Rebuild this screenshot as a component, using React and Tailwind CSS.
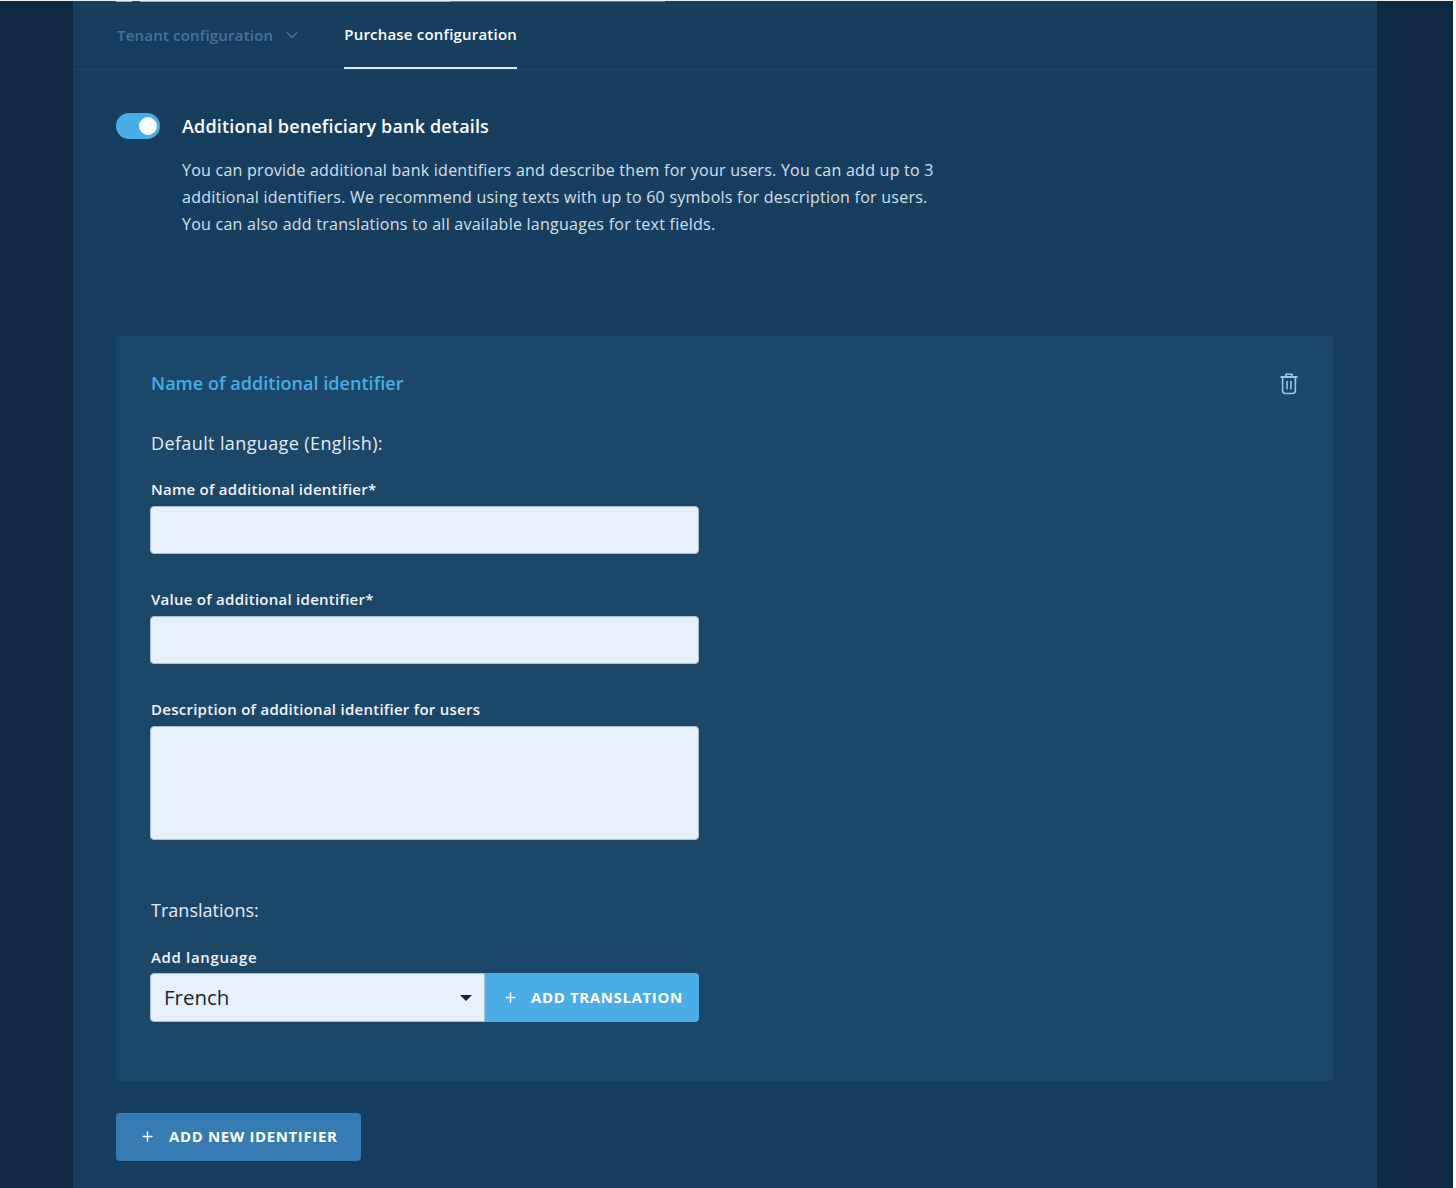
import { ChevronDown, Plus } from 'lucide-react';

const FONT = "font-['Open_Sans','Noto_Sans',sans-serif]";

const Field = ({ label, tall }) => (
  <div className="flex flex-col">
    <label className="ml-px h-[29px] text-[15px] leading-[24px] font-semibold text-[#f2f6fb] tracking-[0.26px]">{label}</label>
    <div className={`w-[549px] rounded-[4px] bg-[#e7f1fd] border border-[#a9bfd3] ${tall ? 'h-[114px]' : 'h-[48px]'}`} />
  </div>
);

const TrashIcon = () => (
  <svg width="18" height="22" viewBox="0 0 18 22" fill="none" stroke="#8ecbf3" strokeWidth="1.6" className="mt-[2px] block">
    <path d="M0.5 4h17" strokeWidth="2" />
    <path d="M6 3.5V1.2h6v2.3" />
    <path d="M2.6 5v12.5a3 3 0 0 0 3 3h6.8a3 3 0 0 0 3-3V5" />
    <path d="M7 8v8.5M11 8v8.5" />
  </svg>
);

export default function App() {
  return (
    <div className={`${FONT} relative flex h-[1188px] w-[1456px] overflow-hidden bg-[#0f2b43]`}>
      <div className="w-[73px] shrink-0" />

      <main className="w-[1304px] shrink-0 bg-[#163f5f]">
        {/* Tabs */}
        <nav className="flex h-[70px] items-start border-b border-[#1b4a6b] pl-[44px]">
          <div className="flex h-[69px] items-center pt-[1px] text-[15px] font-semibold text-[#44749a] tracking-[0.2px]">
            <span>Tenant configuration</span>
            <ChevronDown className="ml-[9px] h-[20px] w-[20px]" strokeWidth={1.5} />
          </div>
          <div className="ml-[42px] flex h-[69px] items-center border-b-2 border-[#dfe6ec] pt-[2px] text-[15px] font-semibold text-white tracking-[0.2px]">
            Purchase configuration
          </div>
        </nav>

        <div className="px-[43px]">
          {/* Toggle heading */}
          <section className="flex pt-[43px]">
            <div className="relative h-[26px] w-[44px] shrink-0 rounded-full bg-[#4aade6]">
              <span className="absolute right-[3px] top-[4px] h-[18px] w-[18px] rounded-full bg-white" />
            </div>
            <div className="ml-[22px]">
              <h2 className="h-[26px] text-[18px] font-semibold leading-[26px] text-white tracking-[0.16px]">Additional beneficiary bank details</h2>
              <p className="mt-[18px] w-[760px] text-[16px] leading-[27px] text-[#d5e0ea] tracking-[0.25px]">
                You can provide additional bank identifiers and describe them for your users. You can add up to 3 additional identifiers. We recommend using texts with up to 60 symbols for description for users. You can also add translations to all available languages for text fields.
              </p>
            </div>
          </section>

          {/* Identifier card */}
          <section className="mt-[98px] h-[745px] w-[1217px] rounded-[4px] bg-[#1b4868] pl-[34px] pr-[34px] pt-[33px]">
            <div className="flex items-center justify-between pr-[1px]">
              <h3 className="ml-px h-[28px] text-[18px] font-semibold leading-[28px] text-[#4aade6] tracking-[0.04px]">Name of additional identifier</h3>
              <TrashIcon />
            </div>
            <p className="ml-px mt-[32px] h-[28px] text-[18px] leading-[28px] text-[#e4ecf3] tracking-[0.38px]">Default language (English):</p>
            <div className="mt-[20px] flex flex-col gap-[33px]">
              <Field label="Name of additional identifier*" />
              <Field label="Value of additional identifier*" />
              <Field label="Description of additional identifier for users" tall />
            </div>
            <p className="ml-px mt-[56px] h-[28px] text-[18px] leading-[28px] text-[#e4ecf3] tracking-[0.02px]">Translations:</p>
            <label className="ml-px mt-[21px] block h-[28px] text-[15px] font-semibold leading-[24px] text-[#f2f6fb] tracking-[0.65px]">Add language</label>
            <div className="flex h-[49px] w-[549px]">
              <div className="flex w-[335px] items-center justify-between rounded-l-[4px] border border-[#a9bfd3] bg-[#e7f1fd] pl-[13px] pr-[12px]">
                <span className="text-[20.5px] text-[#1a2530]">French</span>
                <span className="h-0 w-0 border-x-[6px] border-t-[6px] border-x-transparent border-t-[#14202b]" />
              </div>
              <button className="flex flex-1 items-center rounded-r-[4px] bg-[#4aade6] pl-[18px] text-[15px] font-bold tracking-[0.62px] text-white">
                <Plus className="mr-[13px] h-[15px] w-[15px]" strokeWidth={2.5} />
                ADD TRANSLATION
              </button>
            </div>
          </section>

          <button className="mt-[32px] flex h-[48px] w-[245px] items-center rounded-[4px] bg-[#367cb3] pb-[2px] pl-[24px] text-[15px] font-bold tracking-[0.62px] text-white">
            <Plus className="mr-[14px] h-[15px] w-[15px]" strokeWidth={2.5} />
            ADD NEW IDENTIFIER
          </button>
        </div>
      </main>

      <div className="flex-1" />
      <div className="w-[3px] shrink-0 bg-white" />

      {/* screen capture sliver at the very top */}
      <div className="absolute inset-x-0 top-0">
        <div className="h-px bg-[#eef1f3]" />
        <div className="ml-[116px] flex h-px">
          <div className="w-[16px] bg-[#aab6c0]" />
          <div className="w-[8px] bg-[#163f5f]" />
          <div className="w-[310px] bg-[#aab6c0]" />
          <div className="w-[215px] bg-[#2f8fd0]" />
        </div>
      </div>
    </div>
  );
}
